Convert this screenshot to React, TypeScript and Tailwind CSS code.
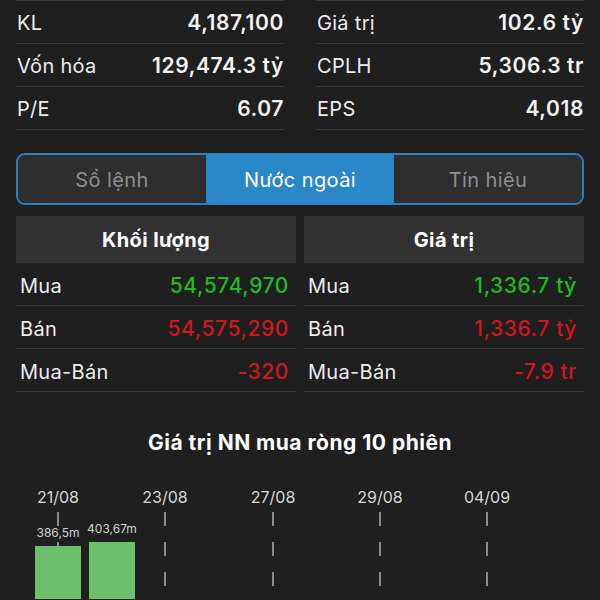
const font = { fontFamily: 'Inter, "Noto Sans", "Liberation Sans", sans-serif' };

const stats = [
  ["KL", "4,187,100", "Giá trị", "102.6 tỷ"],
  ["Vốn hóa", "129,474.3 tỷ", "CPLH", "5,306.3 tr"],
  ["P/E", "6.07", "EPS", "4,018"],
];

const volRows = [
  ["Mua", "54,574,970", "text-[#20bb20]"],
  ["Bán", "54,575,290", "text-[#cf161b]"],
  ["Mua-Bán", "-320", "text-[#cf161b]"],
];

const valRows = [
  ["Mua", "1,336.7 tỷ", "text-[#20bb20]"],
  ["Bán", "1,336.7 tỷ", "text-[#cf161b]"],
  ["Mua-Bán", "-7.9 tr", "text-[#cf161b]"],
];

const dates = ["21/08", "23/08", "27/08", "29/08", "04/09"];

function StatCell({ label, value }: { label: string; value: string }) {
  return (
    <div className="h-[43px] border-t border-[#3a3a3a] flex items-center justify-between pl-[1px] pt-[2px]">
      <span className="text-[20px] tracking-[0.3px] text-[#ececec]">{label}</span>
      <span className="text-[21px] tracking-[0.6px] font-semibold text-[#f2f2f2]">{value}</span>
    </div>
  );
}

function FlowTable({ title, rows }: { title: string; rows: string[][] }) {
  return (
    <div className="flex flex-col">
      <div className="h-[47px] bg-[#323232] flex items-center justify-center text-[20px] tracking-[0.4px] font-bold text-white">
        {title}
      </div>
      {rows.map(([label, value, color]) => (
        <div key={label} className="h-[43px] border-b border-[#3a3a3a] flex items-center justify-between pl-[4px] pr-[7px] pt-[3px]">
          <span className="text-[20px] tracking-[0.3px] text-[#ececec]">{label}</span>
          <span className={`text-[21px] tracking-[0.6px] font-medium ${color}`}>{value}</span>
        </div>
      ))}
    </div>
  );
}

function Chart() {
  const xs = [58, 165, 273, 380, 487];
  return (
    <svg width="568" height="144" viewBox="16 456 568 144" className="block">
      {dates.map((d, i) => (
        <text key={d} x={xs[i]} y={504} textAnchor="middle" fontSize="16" fill="#d6d6d6" style={font}>
          {d}
        </text>
      ))}
      {xs.map((x) => (
        <line key={x} x1={x} x2={x} y1={513} y2={600} stroke="#8a8a8a" strokeWidth="2" strokeDasharray="14 16" />
      ))}
      <rect x={35} y={547} width={46} height={60} fill="#6cc06b" />
      <rect x={89} y={543} width={46} height={60} fill="#6cc06b" />
      <rect x={44} y={527} width={28} height={13} fill="#1f1f1f" />
      <text x={58} y={538} textAnchor="middle" fontSize="12" fill="#cfcfcf" style={font}>
        386,5m
      </text>
      <text x={112} y={534} textAnchor="middle" fontSize="12" fill="#cfcfcf" style={font}>
        403,67m
      </text>
    </svg>
  );
}

export default function App() {
  return (
    <div className="w-[600px] h-[600px] overflow-hidden bg-[#1f1f1f] px-4" style={font}>
      <div className="grid grid-cols-2 gap-x-8">
        {stats.map(([l1, v1, l2, v2]) => (
          <div key={l1} className="contents">
            <StatCell label={l1} value={v1} />
            <StatCell label={l2} value={v2} />
          </div>
        ))}
        <div className="border-t border-[#3a3a3a]" />
        <div className="border-t border-[#3a3a3a]" />
      </div>

      <div className="mt-[23px] h-[52px] flex rounded-[9px] border-2 border-[#2b80c2] overflow-hidden">
        <div className="flex-1 bg-[#2e2e2e] flex items-center justify-center pt-[1px] text-[20px] tracking-[0.4px] text-[#8e8e8e]">Sổ lệnh</div>
        <div className="flex-1 bg-[#2b87c7] flex items-center justify-center pt-[1px] text-[20px] tracking-[0.4px] text-white">Nước ngoài</div>
        <div className="flex-1 bg-[#2e2e2e] flex items-center justify-center pt-[1px] text-[20px] tracking-[0.4px] text-[#8e8e8e]">Tín hiệu</div>
      </div>

      <div className="mt-[11px] grid grid-cols-2 gap-2">
        <FlowTable title="Khối lượng" rows={volRows} />
        <FlowTable title="Giá trị" rows={valRows} />
      </div>

      <div className="mt-[39px] h-[24px] flex items-center justify-center text-[21px] tracking-[0.5px] font-bold text-white">
        Giá trị NN mua ròng 10 phiên
      </div>
      <Chart />
    </div>
  );
}
